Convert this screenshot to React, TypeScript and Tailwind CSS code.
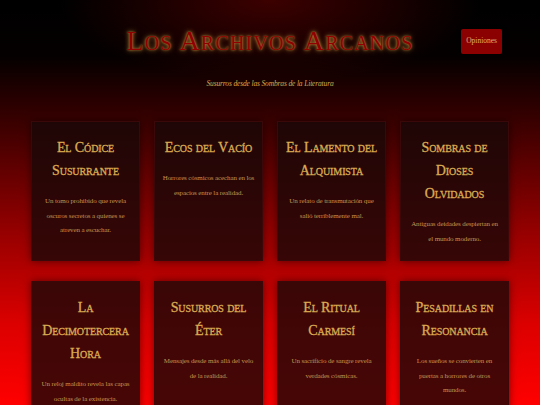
import React from 'react'

type Tome = {
  title: string
  text: string
}

const tomes: Tome[] = [
  { title: 'El Códice Susurrante', text: 'Un tomo prohibido que revela oscuros secretos a quienes se atreven a escuchar.' },
  { title: 'Ecos del Vacío', text: 'Horrores cósmicos acechan en los espacios entre la realidad.' },
  { title: 'El Lamento del Alquimista', text: 'Un relato de transmutación que salió terriblemente mal.' },
  { title: 'Sombras de Dioses Olvidados', text: 'Antiguas deidades despiertan en el mundo moderno.' },
  { title: 'La Decimotercera Hora', text: 'Un reloj maldito revela las capas ocultas de la existencia.' },
  { title: 'Susurros del Éter', text: 'Mensajes desde más allá del velo de la realidad.' },
  { title: 'El Ritual Carmesí', text: 'Un sacrificio de sangre revela verdades cósmicas.' },
  { title: 'Pesadillas en Resonancia', text: 'Los sueños se convierten en puertas a horrores de otros mundos.' },
]

function TomeCard({ tome }: { tome: Tome }) {
  return (
    <div className="flex flex-col items-center bg-[rgba(25,8,8,0.8)] border border-[#3a0808] shadow-[0_0_8px_rgba(0,0,0,0.5)] px-[6px] pt-[14px] pb-[14px] text-center">
      <h2 className="text-[14px] leading-[23px] text-[#dcac52] [font-variant:small-caps] tracking-[-0.1px] [-webkit-text-stroke:0.3px_#dcac52]">
        {tome.title}
      </h2>
      <p className="mt-[12px] px-[1px] text-[7px] leading-[14.5px] text-[#c4944e] tracking-[-0.12px]">
        {tome.text}
      </p>
    </div>
  )
}

export default function App() {
  return (
    <div
      className="h-[405px] overflow-hidden bg-[linear-gradient(to_bottom,#000_0%,#050000_14%,#400000_32%,#980000_58%,#dc0000_80%,#ff0000_100%)]"
      style={{ fontFamily: '"Liberation Serif", "Times New Roman", serif' }}
    >
      <header className="bg-[radial-gradient(ellipse_at_top,rgba(110,0,0,0.55),transparent_55%)] pt-[24px] pb-[18px]">
        <div className="grid grid-cols-[1fr_auto_1fr] items-center">
          <div />
          <h1 className="text-[28px] leading-[34px] text-[#900000] [font-variant:small-caps] tracking-[1.2px] [text-shadow:0_0_5px_#c8963c,0_0_2px_#b8863a]">
            Los Archivos Arcanos
          </h1>
          <div className="flex justify-end pr-[38px]">
            <button className="bg-[#8b0000] rounded-[2px] px-[5px] h-[25px] text-[7.5px] text-[#e0b070] shadow-[0_0_4px_rgba(0,0,0,0.6)]">
              Opiniones
            </button>
          </div>
        </div>
        <p className="mt-[20px] text-center text-[7.5px] italic text-[#d9a94e] tracking-[-0.15px]">
          Susurros desde las Sombras de la Literatura
        </p>
      </header>

      <main className="grid grid-cols-4 gap-x-[14px] gap-y-[20px] px-[31px] pt-[14px]">
        {tomes.map((tome) => (
          <TomeCard key={tome.title} tome={tome} />
        ))}
      </main>
    </div>
  )
}
